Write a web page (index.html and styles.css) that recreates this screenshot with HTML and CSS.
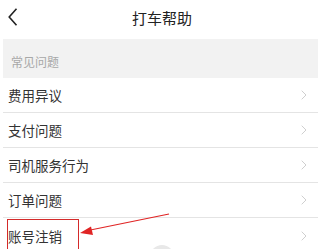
FILE: index.html
```html
<!DOCTYPE html>
<html lang="zh-CN">
<head>
<meta charset="utf-8">
<link rel="stylesheet" href="styles.css">
</head>
<body>
<div class="page">
  <header class="nav">
    <span class="back">
      <svg width="10" height="18" viewBox="0 0 10 18"><polyline points="8.5,0.8 1.2,9 8.5,17.2" fill="none" stroke="#222" stroke-width="1.6"/></svg>
    </span>
    <h1 class="title">打车帮助</h1>
  </header>
  <div class="list">
    <div class="section">常见问题</div>
    <div class="row"><span>费用异议</span><svg class="chev" width="6" height="10" viewBox="0 0 6 10"><polyline points="0.7,0.7 5,5 0.7,9.3" fill="none" stroke="#cfcfcf" stroke-width="1"/></svg></div>
    <div class="row"><span>支付问题</span><svg class="chev" width="6" height="10" viewBox="0 0 6 10"><polyline points="0.7,0.7 5,5 0.7,9.3" fill="none" stroke="#cfcfcf" stroke-width="1"/></svg></div>
    <div class="row"><span>司机服务行为</span><svg class="chev" width="6" height="10" viewBox="0 0 6 10"><polyline points="0.7,0.7 5,5 0.7,9.3" fill="none" stroke="#cfcfcf" stroke-width="1"/></svg></div>
    <div class="row"><span>订单问题</span><svg class="chev" width="6" height="10" viewBox="0 0 6 10"><polyline points="0.7,0.7 5,5 0.7,9.3" fill="none" stroke="#cfcfcf" stroke-width="1"/></svg></div>
    <div class="row"><span>账号注销</span><svg class="chev" width="6" height="10" viewBox="0 0 6 10"><polyline points="0.7,0.7 5,5 0.7,9.3" fill="none" stroke="#cfcfcf" stroke-width="1"/></svg></div>
  </div>
  <div class="mark"></div>
  <svg class="arrow" width="324" height="249" viewBox="0 0 324 249">
    <line x1="169" y1="214" x2="88" y2="230.5" stroke="#e02424" stroke-width="1.2"/>
    <polygon points="80,233 91,226.5 93,235" fill="#e02424"/>
  </svg>
  <div class="fab"></div>
</div>
</body>
</html>
```
FILE: styles.css
```css
html, body {
  margin: 0;
  padding: 0;
  background: #fff;
}
body {
  font-family: "Noto Sans CJK SC", "Noto Sans", sans-serif;
  color: #333;
}
.page {
  position: relative;
  width: 324px;
  height: 249px;
  overflow: hidden;
}
.nav {
  height: 39px;
  display: flex;
  align-items: center;
  justify-content: center;
  position: relative;
}
.back {
  position: absolute;
  left: 8px;
  top: 8px;
  display: block;
  width: 10px;
  height: 18px;
}
.back svg {
  display: block;
}
.title {
  margin: 0;
  font-size: 15px;
  font-weight: normal;
  color: #222;
  line-height: 20px;
  margin-top: -4px;
}
.list {
  margin: 0 6px 0 3px;
}
.section {
  height: 39px;
  background: #f2f2f2;
  color: #a8a8a8;
  font-size: 12px;
  display: flex;
  align-items: center;
  padding: 6px 0 0 8px;
  box-sizing: border-box;
}
.row {
  height: 35px;
  box-sizing: border-box;
  border-bottom: 1px solid #e4e4e4;
  display: flex;
  align-items: center;
  justify-content: space-between;
  padding: 0 11px 0 5px;
  font-size: 13.5px;
  color: #333;
}
.row:last-child {
  border-bottom: none;
}
.chev {
  display: block;
}
.mark {
  position: absolute;
  left: 7px;
  top: 219px;
  width: 70px;
  height: 40px;
  border: 1px solid #d42a2a;
}
.arrow {
  position: absolute;
  left: 0;
  top: 0;
}
.fab {
  position: absolute;
  left: 150px;
  top: 245px;
  width: 24px;
  height: 24px;
  border-radius: 50%;
  background: #e8e8e8;
}
```
